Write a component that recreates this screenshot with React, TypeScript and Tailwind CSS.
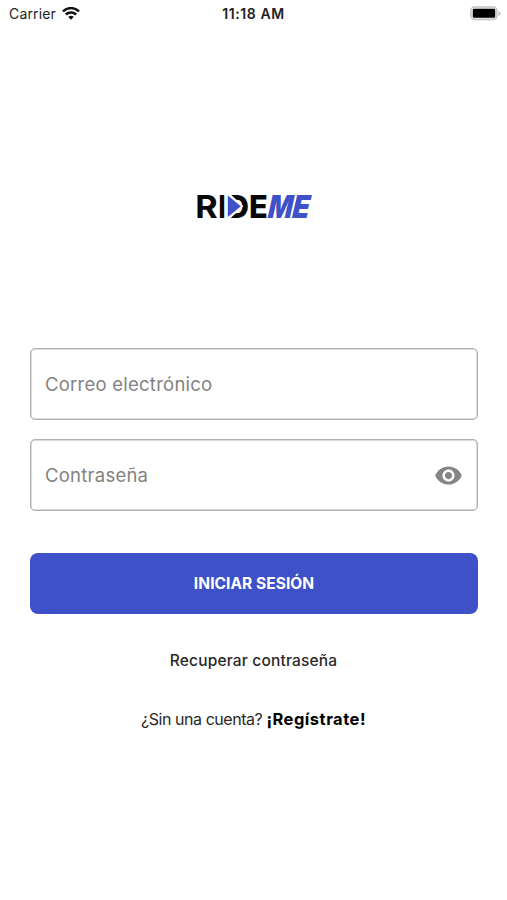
import React from 'react';

function StatusBar() {
  return (
    <header className="grid h-7 grid-cols-3 items-center pl-[9px] pr-[6px] text-[#222]">
      <div className="flex items-center gap-[6px]">
        <span className="text-[14px] leading-7 tracking-[0.16px]">Carrier</span>
        <svg width="18" height="14" viewBox="0 0 18 14" fill="none" stroke="#111" strokeWidth="2.5">
          <path d="M0.9 4.4C5.5 0 12.5 0 17.1 4.4" />
          <path d="M3.8 7.5C6.8 4.7 11.2 4.7 14.2 7.5" />
          <path d="M6.2 9.9C7.8 8.4 10.2 8.4 11.8 9.9L9 12.7Z" fill="#111" stroke="none" />
        </svg>
      </div>
      <span className="-ml-[3px] whitespace-nowrap text-center text-[14px] font-semibold leading-7 tracking-[0.6px]">11:18 AM</span>
      <svg className="justify-self-end" width="31" height="16" viewBox="0 0 31 16">
        <rect x="0.9" y="1" width="26" height="12.6" rx="3.8" fill="#eee" stroke="#c4c4c4" strokeWidth="1.5" />
        <rect x="2.8" y="2.8" width="22.4" height="9" rx="1.2" fill="#000" />
        <path d="M28.6 5.2C31.2 6 31.2 9 28.6 9.8Z" fill="#b5b5b5" />
      </svg>
    </header>
  );
}

function Logo() {
  return (
    <svg width="141" height="50" viewBox="-10 0 141 50" className="font-[Inter,sans-serif]" fontSize="31.5" fontWeight="700">
      <text x="2.3" y="36.5" fill="#080808" textLength="22.4" lengthAdjust="spacingAndGlyphs">R</text>
      <text x="25" y="36.5" fill="#080808" textLength="8" lengthAdjust="spacingAndGlyphs">I</text>
      <text x="33" y="36.5" fill="#080808" fontWeight="800" textLength="23" lengthAdjust="spacingAndGlyphs">D</text>
      <path d="M33.2 11H38V13.7L50.3 25.2L38 36.7V39H33.2Z" fill="#fff" />
      <path d="M34.8 14.6L47.9 25.2L34.8 36Z" fill="#3f51c8" />
      <text x="56" y="36.5" fill="#080808" fontWeight="800" textLength="18.8" lengthAdjust="spacingAndGlyphs">E</text>
      <g transform="translate(75 36.5) skewX(-5)">
        <text x="-0.6" y="0" fill="#3f51c8" fontStyle="italic" fontWeight="900" textLength="24.6" lengthAdjust="spacingAndGlyphs">M</text>
        <text x="23.8" y="0" fill="#3f51c8" fontStyle="italic" fontWeight="900" textLength="17.4" lengthAdjust="spacingAndGlyphs">E</text>
      </g>
    </svg>
  );
}

function Field({ label, children }: { label: string; children?: React.ReactNode }) {
  return (
    <div className="flex h-[72px] items-center justify-between rounded-[5px] border border-[#b0b0b0] pl-[14px] pr-[14px] text-[#828282] shadow-[inset_0_0_0_0.5px_#b8b8b8]">
      <span className="pt-[2px] text-[18.5px] tracking-[0.24px]">{label}</span>
      {children}
    </div>
  );
}

export default function App() {
  return (
    <main className="flex h-[900px] w-[507px] flex-col overflow-hidden bg-white font-[Inter,sans-serif]">
      <StatusBar />
      <div className="mt-[153px] flex justify-center">
        <Logo />
      </div>
      <form className="ml-[30px] mr-[29px] mt-[117px] flex flex-col">
        <Field label="Correo electrónico" />
        <div className="h-[19px]" />
        <Field label="Contraseña">
          <svg width="29" height="29" viewBox="0 0 24 24" fill="#858585">
            <path d="M12 4.5C7 4.5 2.73 7.61 1 12c1.73 4.39 6 7.5 11 7.5s9.27-3.11 11-7.5c-1.73-4.39-6-7.5-11-7.5zM12 17c-2.76 0-5-2.24-5-5s2.24-5 5-5 5 2.24 5 5-2.24 5-5 5zm0-8c-1.66 0-3 1.34-3 3s1.34 3 3 3 3-1.34 3-3-1.34-3-3-3z" />
          </svg>
        </Field>
        <button type="button" className="mt-[42px] h-[61px] rounded-[8px] bg-[#3f51c8] pt-px text-[15.5px] font-bold tracking-[0.05px] text-white">
          INICIAR SESIÓN
        </button>
      </form>
      <a className="mt-[35px] text-center text-[15.5px] font-medium leading-6 tracking-[0.18px] text-[#292929]">Recuperar contraseña</a>
      <p className="mt-[34px] text-center text-[16px] leading-6 text-[#292929]">
        <span className="tracking-[-0.45px]">¿Sin una cuenta? </span>
        <span className="text-[16.5px] font-bold tracking-[0.5px] text-black">¡Regístrate!</span>
      </p>
    </main>
  );
}
